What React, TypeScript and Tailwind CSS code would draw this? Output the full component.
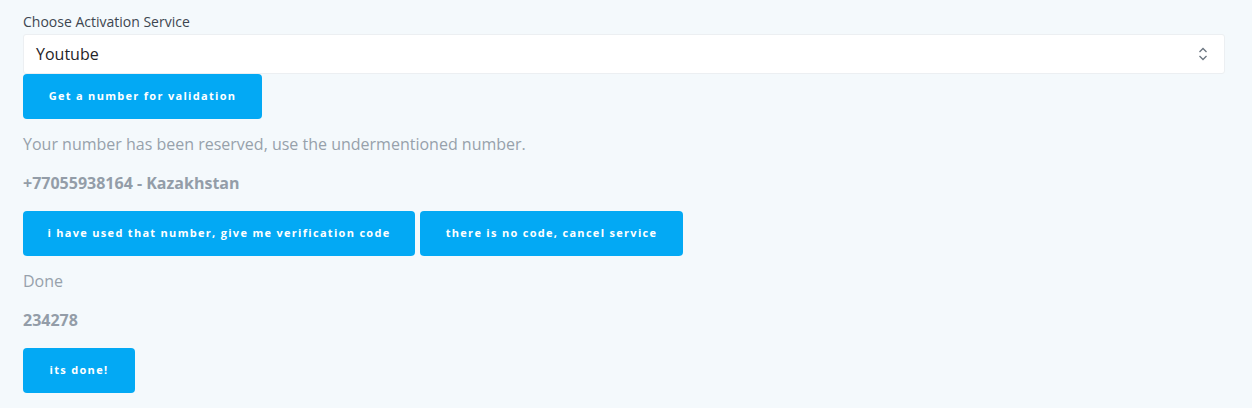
export default function App() {
  const btn =
    "bg-[#03a9f4] text-white text-[11px] font-bold tracking-[1.3px] rounded-[4px] px-[20px] h-[45px] flex items-center justify-center";
  return (
    <div className="min-h-[408px] bg-[#f4f9fc] px-[23px] pt-[11px] font-['Open_Sans',sans-serif]">
      <label className="block text-[14px] leading-[22px] text-[#3d4650]">
        Choose Activation Service
      </label>
      <div className="mt-[1px] mr-[4px] h-[40px] bg-white border border-[#eceff2] rounded-[3px] flex items-center justify-between pl-[12px] pr-[16px]">
        <span className="text-[16px] text-[#1f2328]">Youtube</span>
        <svg width="10" height="14" viewBox="0 0 10 14" fill="none" stroke="#6b7580" strokeWidth="1.3">
          <path d="M1.5 5 L5 1.5 L8.5 5" />
          <path d="M1.5 9 L5 12.5 L8.5 9" />
        </svg>
      </div>
      <div className="flex">
        <button className={btn + " w-[239px] h-[44px]"}>Get a number for validation</button>
      </div>
      <p className="mt-[13px] text-[16px] leading-[24px] text-[#97a1ab]">
        Your number has been reserved, use the undermentioned number.
      </p>
      <p className="mt-[15px] text-[16px] leading-[24px] font-bold text-[#939da8]">
        +77055938164 - Kazakhstan
      </p>
      <div className="mt-[16px] flex gap-[5px]">
        <button className={btn + " w-[392px]"}>i have used that number, give me verification code</button>
        <button className={btn + " w-[263px]"}>there is no code, cancel service</button>
      </div>
      <p className="mt-[13px] text-[16px] leading-[24px] text-[#97a1ab]">Done</p>
      <p className="mt-[15px] text-[16px] leading-[24px] font-bold text-[#939da8]">234278</p>
      <div className="mt-[16px] flex">
        <button className={btn + " w-[112px]"}>its done!</button>
      </div>
    </div>
  );
}
